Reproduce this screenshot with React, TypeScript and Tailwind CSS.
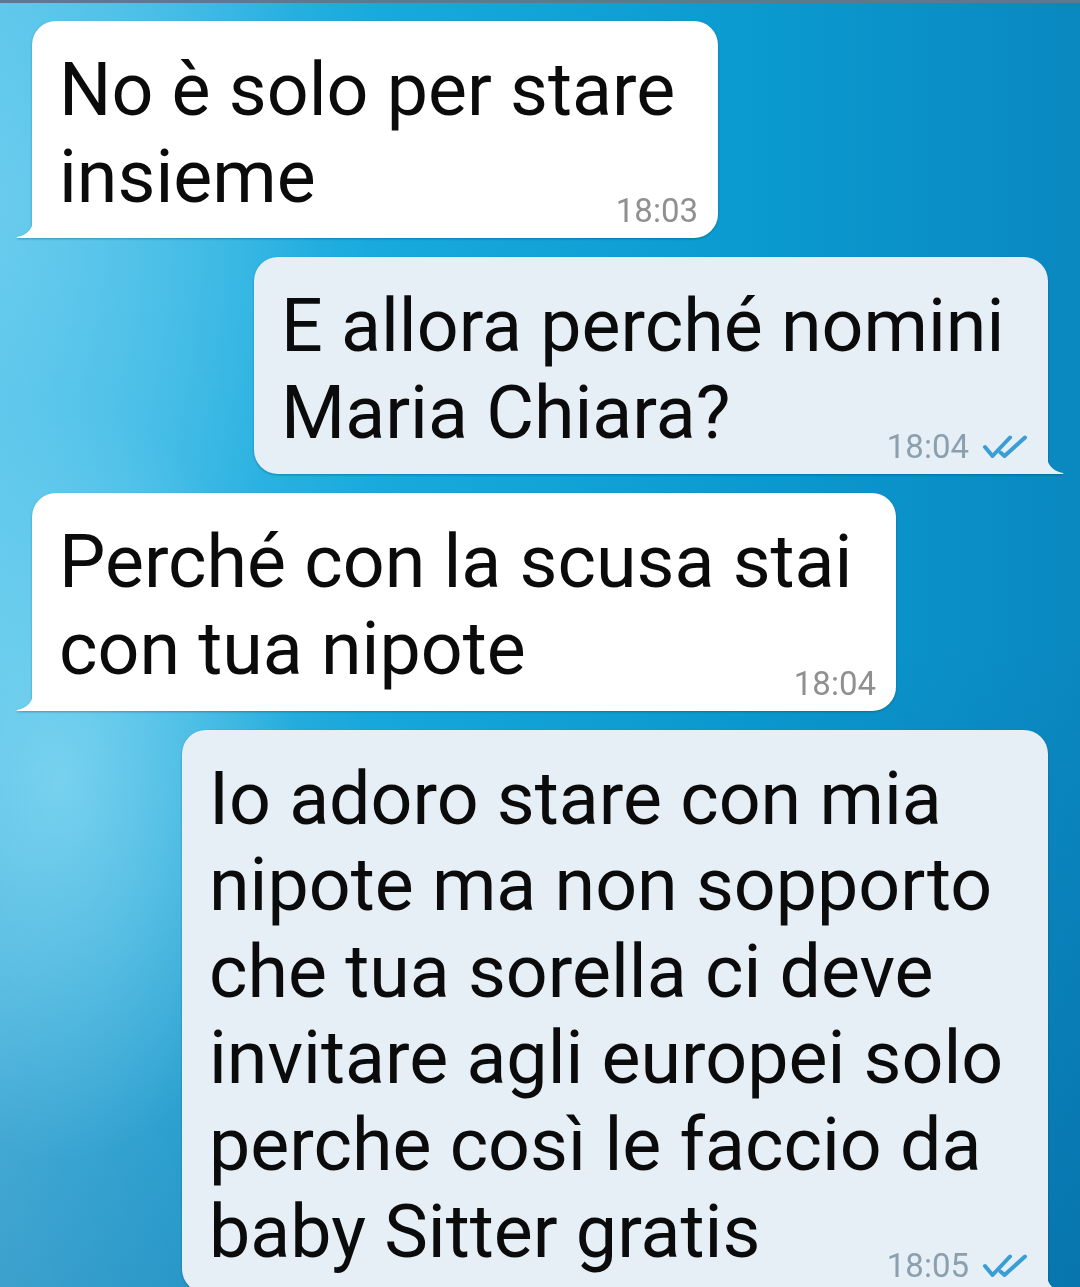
import React from "react";

type Msg = {
  text: string;
  time: string;
  out?: boolean;
  width: string;
};

const messages: Msg[] = [
  { text: "No è solo per stare insieme", time: "18:03", width: "w-[686px]" },
  { text: "E allora perché nomini Maria Chiara?", time: "18:04", out: true, width: "w-[794px]" },
  { text: "Perché con la scusa stai con tua nipote", time: "18:04", width: "w-[864px]" },
  {
    text: "Io adoro stare con mia nipote ma non sopporto che tua sorella ci deve invitare agli europei solo perche così le faccio da baby Sitter gratis",
    time: "18:05",
    out: true,
    width: "w-[866px]",
  },
];

function DoubleCheck() {
  return (
    <svg width="46" height="24" viewBox="0 0 46 24" fill="none" className="ml-[13px]">
      <path d="M3 12 L10.5 21 L28 2.5" stroke="#3a9ed6" strokeWidth="4" strokeLinecap="round" strokeLinejoin="round" />
      <path d="M18.5 17.5 L22.5 21 L43 2.5" stroke="#3a9ed6" strokeWidth="4" strokeLinecap="round" strokeLinejoin="round" />
    </svg>
  );
}

function Tail({ out }: { out?: boolean }) {
  return out ? (
    <svg width="18" height="24" viewBox="0 0 18 24" className="absolute bottom-0 -right-[16px]">
      <path d="M0 0 C0 14 6 21 17 23 Q18 23.5 17 24 L0 24 Z" fill="#e6eef6" />
    </svg>
  ) : (
    <svg width="18" height="24" viewBox="0 0 18 24" className="absolute bottom-0 -left-[16px]">
      <path d="M18 0 C18 14 12 21 1 23 Q0 23.5 1 24 L18 24 Z" fill="#ffffff" />
    </svg>
  );
}

function Bubble({ msg }: { msg: Msg }) {
  const out = msg.out;
  return (
    <div
      className={`relative ${msg.width} ${out ? "self-end mr-[32px] rounded-tl-[24px] rounded-tr-[24px] rounded-bl-[24px] bg-[#e6eef6]" : "self-start ml-[32px] rounded-tl-[24px] rounded-tr-[24px] rounded-br-[24px] bg-white"} pl-[27px] pr-[20px] pt-[26px] pb-[7px] drop-shadow-[0_1px_1px_rgba(0,40,70,0.35)]`}
    >
      <Tail out={out} />
      <div className="text-[73.5px] leading-[86.6px] text-[#0b0b0b]">{msg.text}</div>
      <div className="flex justify-end items-center -mt-[29px] h-[40px]">
        <span className={`text-[33px] leading-[40px] ${out ? "text-[#8ba0af]" : "text-[#909090]"}`}>{msg.time}</span>
        {out && <DoubleCheck />}
      </div>
    </div>
  );
}

export default function App() {
  return (
    <div
      className="w-[1080px] h-[1287px] overflow-hidden bg-[image:radial-gradient(ellipse_240px_380px_at_60px_780px,rgba(140,220,244,0.7),transparent),radial-gradient(ellipse_320px_520px_at_0px_200px,rgba(120,210,240,0.6),transparent),linear-gradient(to_bottom,transparent_50%,rgba(0,60,120,0.25)),linear-gradient(to_right,#52c2e9,#18aadd_35%,#0a9ad0_70%,#0a88c0)]"
      style={{ fontFamily: "Roboto, 'Noto Sans', sans-serif" }}
    >
      <div className="h-[3px] bg-[#5a7b8f]" />
      <div className="flex flex-col gap-[19px] pt-[18px]">
        {messages.map((m, i) => (
          <Bubble key={i} msg={m} />
        ))}
      </div>
    </div>
  );
}
